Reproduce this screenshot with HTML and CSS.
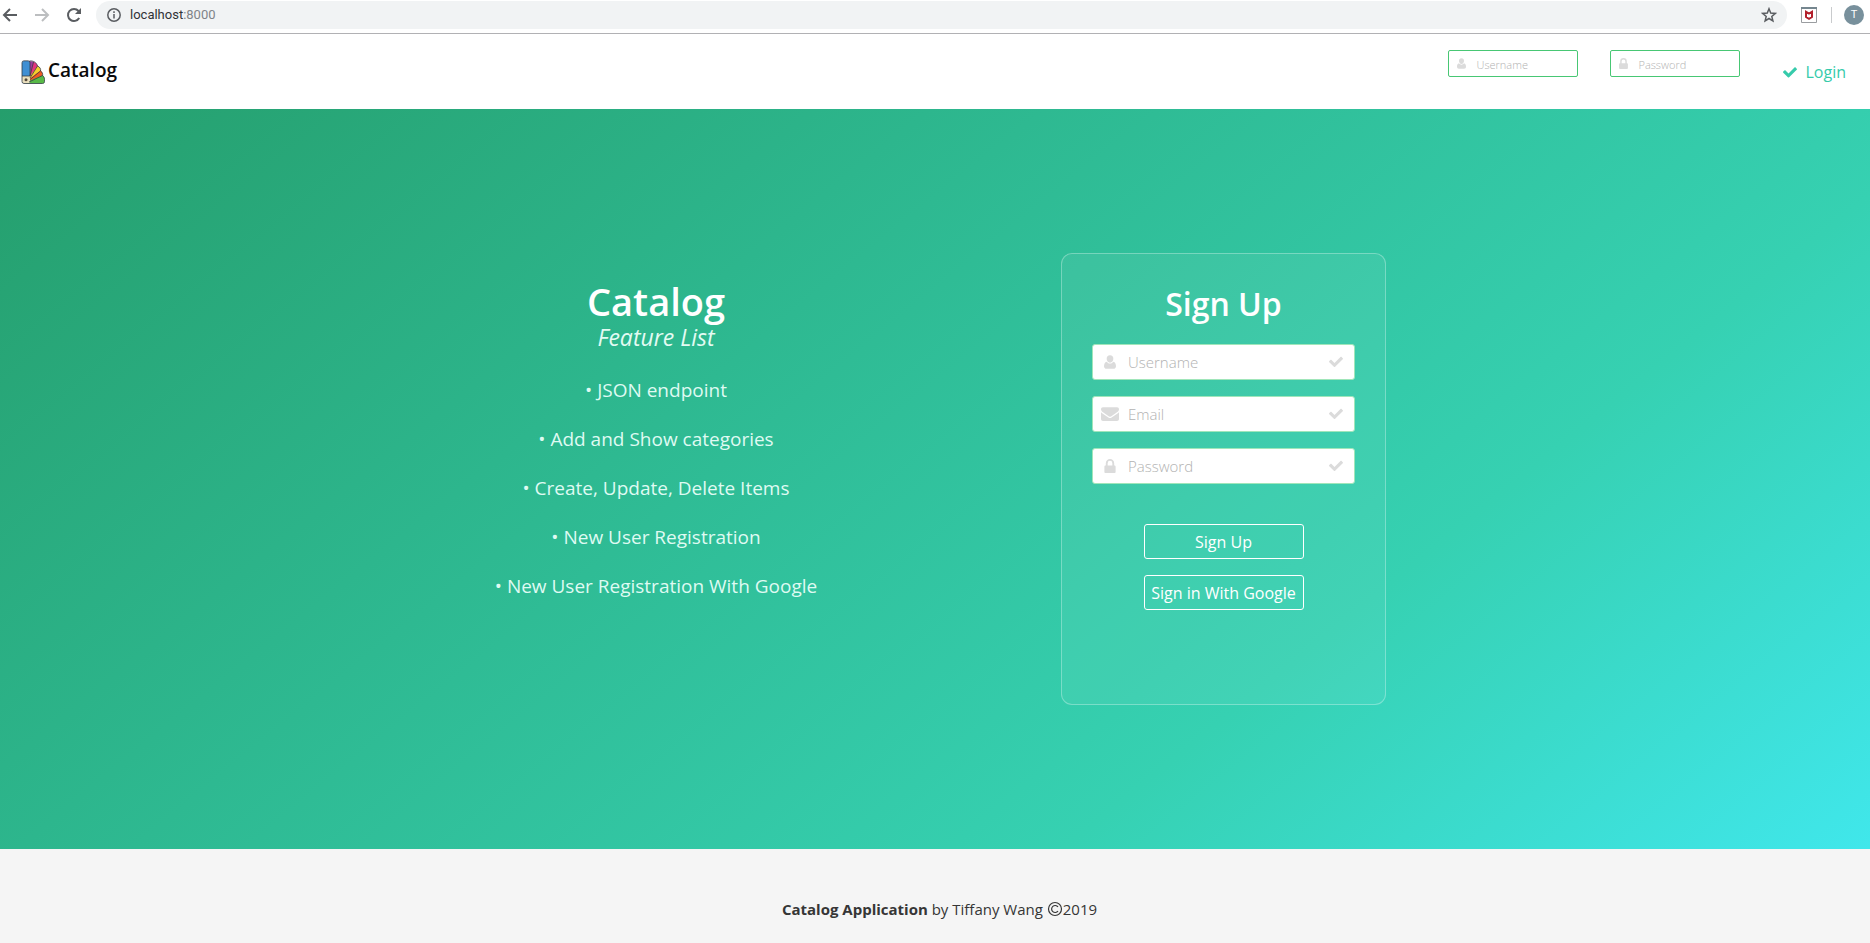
FILE: index.html
```html
<!DOCTYPE html>
<html lang="en">
<head>
<meta charset="utf-8">
<title>Catalog</title>
<link rel="stylesheet" href="styles.css">
</head>
<body>
<svg class="sprite" aria-hidden="true">
  <symbol id="user" viewBox="0 0 14 16"><path d="M7 0a4 4.200 0 0 1 3.900 4.200C10.900 6.600 9.200 8.800 7 8.800S3.100 6.600 3.100 4.200A4 4.200 0 0 1 7 0zM3.200 7.600C4.300 9.200 5.700 9.800 7 9.800s2.700-.6 3.800-2.200C13.300 7.900 14 10.800 14 13c0 1.800-1.200 3-3 3H3c-1.800 0-3-1.200-3-3 0-2.200.7-5.100 3.200-5.400z"/></symbol>
  <symbol id="lock" viewBox="0 0 12 15"><path fill-rule="evenodd" d="M1.500 7V4.500a4.500 4.500 0 0 1 9 0V7h.3c.7 0 1.200.5 1.200 1.200v5.600c0 .7-.5 1.200-1.200 1.200H1.200C.5 15 0 14.500 0 13.800V8.200C0 7.500.5 7 1.200 7zM3.500 7h5V4.500a2.500 2.500 0 0 0-5 0z"/></symbol>
  <symbol id="mail" viewBox="0 0 18 14"><path d="M0 2.300C0 1 .8.300 2 .3h14c1.200 0 2 .8 2 1.900 0 1.300-.9 2.300-2 3.100L11 8.800c-.7.500-1.300 1-2 1s-1.300-.5-2-1L2 5.300C1 4.600 0 3.400 0 2.300zM0 5.300c.4.400.7.700 1.100 1l4.800 3.300c1 .8 2 1.500 3.100 1.500s2.100-.7 3.100-1.500l4.800-3.300c.4-.3.700-.6 1.100-1V12c0 1.100-.9 2-2 2H2c-1.100 0-2-.9-2-2z"/></symbol>
  <symbol id="check" viewBox="0 0 16 12"><path d="M15.700 2.800 7 11.500c-.4.400-1 .4-1.400 0L.3 6.200c-.4-.4-.4-.9 0-1.300l1.300-1.300c.4-.4.900-.4 1.300 0l3.400 3.500L13.100.3c.4-.4.900-.4 1.300 0l1.300 1.300c.4.400.4.900 0 1.200z"/></symbol>
</svg>

<header class="browser">
  <button class="tool" aria-label="Back"><svg viewBox="0 0 16 16"><path d="M15 8H2M8 2 2 8l6 6"/></svg></button>
  <button class="tool tool-off" aria-label="Forward"><svg viewBox="0 0 16 16"><path d="M1 8h13M8 2l6 6-6 6"/></svg></button>
  <button class="tool" aria-label="Reload"><svg viewBox="0 0 16 16"><path d="M13.200 11A6 6 0 1 1 12.500 4L14 5.500"/><path class="solid" d="M15 1v6H9z"/></svg></button>
  <div class="address">
    <svg class="info" viewBox="0 0 16 16" aria-hidden="true"><circle cx="8" cy="8" r="6.200"/><path d="M8 7v4.500M8 4.300V6"/></svg>
    <span class="url">localhost<span class="port">:8000</span></span>
    <button class="star" aria-label="Bookmark"><svg viewBox="0 0 16 16"><path d="m8 1.800 1.700 4.300 4.600.3-3.500 3 1.100 4.500L8 11.500l-3.900 2.400 1.100-4.500-3.500-3 4.600-.3z"/></svg></button>
  </div>
  <button class="shield" aria-label="Web protection"><svg viewBox="0 0 16 16"><path class="frame" d="M.5.500h15v15H.5z"/><path class="band" d="M0 0h16v2H0z"/><path class="mark" d="M5 4.800v5.200l3 1.800 3-1.800V4.800L8 6.500z"/></svg></button>
  <span class="divider"></span>
  <button class="avatar" aria-label="Profile">T</button>
</header>

<nav class="navbar">
  <a class="brand" href="#">
    <svg viewBox="0 0 24 24" aria-hidden="true">
      <path fill="#58b947" d="M5 23.500V21l16-6.500c2.300 1.500 3 4 2.500 7 0 1.300-.7 2-2 2z"/>
      <path fill="#ef5a23" d="M5 22 18.500 9.500c2.400 1.500 3.500 3.500 3 6z"/>
      <path fill="#f4cf2c" d="M6 20.500 15.500 5c2.500 1 4.200 3 4 5.500z"/>
      <path fill="#e4357e" d="M7 19 11.500 1.500c2.500.5 4.500 2 5 4.500z"/>
      <path fill="#9c3ca0" d="M8 16V1l4.500.8z"/>
      <rect x="1" y="1" width="8" height="22" rx="2" fill="#3f8fd3"/>
      <path fill="#eadfbd" d="M1 16h8v5.500a2 2 0 0 1-2 2H3a2 2 0 0 1-2-2z"/>
      <circle cx="5" cy="19.700" r="1.500" fill="#554a3c"/>
      <path fill="none" stroke="#333e48" stroke-width=".8" d="M3 .8h4a2 2 0 0 1 2 2V16H1V2.800a2 2 0 0 1 2-2zM8.500 1c4-.5 7 1.500 8 5 2.500 1 3.500 3 3 5 2 1.300 2.500 3 2 4.500 2 1.500 2.300 3.500 2 6 0 1.300-.7 2-2 2H3a2 2 0 0 1-2-2V16M9 16l3.500-14M9 18l7.500-12M9 19.500l10.500-8.500M8 22l13.500-6.500"/>
    </svg>
    <span>Catalog</span>
  </a>
  <form class="login">
    <label class="field small"><svg><use href="#user"/></svg><input type="text" placeholder="Username" aria-label="Username"></label>
    <label class="field small"><svg><use href="#lock"/></svg><input type="password" placeholder="Password" aria-label="Password"></label>
    <button class="login-button"><svg><use href="#check"/></svg>Login</button>
  </form>
</nav>

<main class="hero">
  <section class="features">
    <h1>Catalog</h1>
    <h2>Feature List</h2>
    <ul>
      <li>• JSON endpoint</li>
      <li>• Add and Show categories</li>
      <li>• Create, Update, Delete Items</li>
      <li>• New User Registration</li>
      <li>• New User Registration With Google</li>
    </ul>
  </section>
  <form class="card">
    <h2>Sign Up</h2>
    <label class="field"><svg><use href="#user"/></svg><input type="text" placeholder="Username" aria-label="Username"><svg class="tick"><use href="#check"/></svg></label>
    <label class="field"><svg class="wide"><use href="#mail"/></svg><input type="email" placeholder="Email" aria-label="Email"><svg class="tick"><use href="#check"/></svg></label>
    <label class="field"><svg><use href="#lock"/></svg><input type="password" placeholder="Password" aria-label="Password"><svg class="tick"><use href="#check"/></svg></label>
    <div class="actions">
      <button type="submit">Sign Up</button>
      <button type="button">Sign in With Google</button>
    </div>
  </form>
</main>

<footer class="footer">
  <p><strong>Catalog Application</strong> by Tiffany Wang <svg viewBox="0 0 16 16" role="img" aria-label="Copyright"><circle cx="8" cy="8" r="6.500"/><path d="M11 6a3.500 3.500 0 1 0 0 4"/></svg>2019</p>
</footer>
</body>
</html>
```
FILE: styles.css
```css
* { box-sizing: border-box; }
body {
  margin: 0;
  min-height: 100vh;
  display: flex;
  flex-direction: column;
  background: #fff;
  color: #363636;
  font: 15px/24px "Open Sans", "Noto Sans", sans-serif;
}
h1, h2, p, ul { margin: 0; padding: 0; }
button, input { font: inherit; color: inherit; }
button { padding: 0; border: 0; background: none; }
.sprite { display: none; }

/* Browser toolbar */
.browser {
  display: flex;
  align-items: center;
  height: 34px;
  padding: 0 6px 4px 2px;
  border-bottom: 1px solid #b1b1b4;
}
.tool { display: flex; width: 16px; margin-right: 16px; }
.tool svg, .info, .star svg { width: 16px; height: 16px; fill: none; stroke: #5a5d61; stroke-width: 2; }
.tool-off svg { stroke: #bcbec0; }
.tool .solid { fill: #5a5d61; stroke: none; }
.address {
  flex: 1;
  display: flex;
  align-items: center;
  height: 28px;
  margin: 0 14px 0 -2px;
  padding: 0 10px;
  border-radius: 14px;
  background: #f1f3f4;
}
.info { stroke-width: 1.500; }
.url { flex: 1; margin-left: 8px; font: 13px/20px Roboto, sans-serif; color: #303236; }
.port { color: #808488; }
.star { display: flex; }
.star svg { stroke-width: 1.500; }
.shield, .shield svg { display: block; width: 16px; height: 16px; }
.frame { fill: #fff; stroke: #9a9da0; }
.band { fill: #75868f; }
.mark { fill: none; stroke: #b3202c; stroke-width: 2; }
.divider { width: 1px; height: 16px; margin: 0 12px 0 14px; background: #c9cbcd; }
.avatar {
  width: 20px;
  height: 20px;
  border-radius: 50%;
  background: #78909c;
  color: #fff;
  font: 11px/20px Roboto, sans-serif;
}

/* Site navigation */
.navbar {
  display: flex;
  justify-content: space-between;
  height: 75px;
  padding: 16px 24px 0 21px;
}
.brand {
  display: flex;
  align-items: flex-start;
  gap: 3px;
  height: 40px;
  padding-top: 8px;
  color: #0a0a0a;
  font-size: 19px;
  font-weight: 600;
  text-decoration: none;
}
.brand svg { width: 24px; height: 24px; margin-top: 2px; }
.login { display: flex; align-items: flex-start; gap: 32px; }
.login-button {
  display: flex;
  align-items: center;
  gap: 8px;
  margin: 10px 0 0 11px;
  color: #36cbab;
  font-size: 16px;
}
.login-button svg { width: 14px; height: 11px; fill: currentColor; }

/* Text fields */
.field {
  display: flex;
  align-items: center;
  height: 36px;
  padding: 0 11px;
  border: 1px solid #a0e6ba;
  border-radius: 3px;
  background: #fff;
}
.field svg { flex: none; width: 12px; height: 14px; fill: #dbdbdb; }
.field .wide { width: 18px; height: 14px; margin: 0 -3px; }
.field .tick { width: 14px; height: 12px; }
.field input {
  flex: 1;
  min-width: 0;
  height: 28px;
  margin-left: 12px;
  padding: 0;
  border: 0;
  outline: 0;
  background: none;
  font-weight: 300;
}
.field input::placeholder { color: #b2b2b2; opacity: 1; }
.field.small { width: 130px; height: 27px; padding: 0 8px; border-color: #48c774; border-radius: 2px; }
.field.small svg { width: 9px; height: 11px; }
.field.small input { height: 24px; margin-left: 10px; padding-top: 2px; font-size: 11px; }

/* Hero */
.hero {
  flex: 1;
  display: flex;
  justify-content: center;
  align-items: center;
  gap: 242px;
  padding: 0 0 0 9px;
  background: linear-gradient(141deg, #259e6c 0%, #36d1b2 71%, #40e7eb 100%);
  color: #fff;
}
.features { width: 326px; padding-bottom: 68px; text-align: center; white-space: nowrap; }
.features h1 { font-size: 38px; line-height: 44px; font-weight: 600; }
.features h2 { font-size: 23px; line-height: 28px; font-weight: 400; font-style: italic; color: #e3fbf3; }
.features ul { margin-top: 15px; list-style: none; }
.features li { font-size: 19px; line-height: 49px; color: #dffaf2; }
.card {
  display: flex;
  flex-direction: column;
  gap: 16px;
  width: 325px;
  min-height: 452px;
  padding: 30px 30px;
  border: 1px solid rgba(255, 255, 255, .3);
  border-radius: 11px;
  background: rgba(255, 255, 255, .06);
}
.card h2 { margin-bottom: 4px; font-size: 32px; line-height: 40px; font-weight: 600; text-align: center; }
.actions { display: flex; flex-direction: column; align-items: center; gap: 16px; margin-top: 24px; }
.actions button { width: 160px; height: 35px; border: 1px solid #fff; border-radius: 3px; font-size: 16px; white-space: nowrap; }

/* Footer */
.footer {
  height: 94px;
  padding: 48px 0 0 9px;
  background: #f5f5f5;
  text-align: center;
}
.footer strong { font-weight: 700; }
.footer svg { width: 16px; height: 16px; vertical-align: -2px; fill: none; stroke: currentColor; stroke-width: 1.200; }
```
